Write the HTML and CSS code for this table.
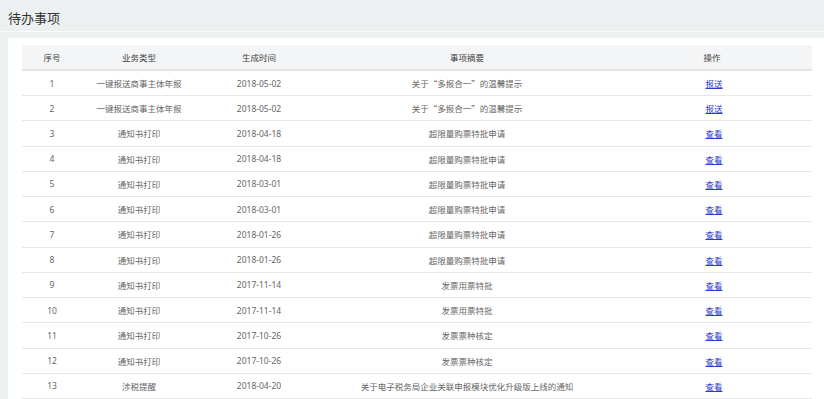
FILE: index.html
```html
<!DOCTYPE html>
<html lang="zh-CN">
<head>
    <meta charset="UTF-8">
    <title>待办事项</title>
    <link rel="stylesheet" href="styles.css">
</head>
<body>
    <div class="page-title">待办事项</div>

    <div class="panel">
        <table class="todo-table">
            <colgroup>
                <col class="col-no">
                <col class="col-type">
                <col class="col-date">
                <col class="col-summary">
                <col class="col-op">
            </colgroup>
            <thead>
                <tr>
                    <th>序号</th>
                    <th>业务类型</th>
                    <th>生成时间</th>
                    <th>事项摘要</th>
                    <th>操作</th>
                </tr>
            </thead>
            <tbody>
                <tr><td>1</td><td>一键报送商事主体年报</td><td>2018-05-02</td><td class="summary">关于“多报合一”的温馨提示</td><td><a href="#">报送</a></td></tr>
                <tr><td>2</td><td>一键报送商事主体年报</td><td>2018-05-02</td><td class="summary">关于“多报合一”的温馨提示</td><td><a href="#">报送</a></td></tr>
                <tr><td>3</td><td>通知书打印</td><td>2018-04-18</td><td class="summary">超限量购票特批申请</td><td><a href="#">查看</a></td></tr>
                <tr><td>4</td><td>通知书打印</td><td>2018-04-18</td><td class="summary">超限量购票特批申请</td><td><a href="#">查看</a></td></tr>
                <tr><td>5</td><td>通知书打印</td><td>2018-03-01</td><td class="summary">超限量购票特批申请</td><td><a href="#">查看</a></td></tr>
                <tr><td>6</td><td>通知书打印</td><td>2018-03-01</td><td class="summary">超限量购票特批申请</td><td><a href="#">查看</a></td></tr>
                <tr><td>7</td><td>通知书打印</td><td>2018-01-26</td><td class="summary">超限量购票特批申请</td><td><a href="#">查看</a></td></tr>
                <tr><td>8</td><td>通知书打印</td><td>2018-01-26</td><td class="summary">超限量购票特批申请</td><td><a href="#">查看</a></td></tr>
                <tr><td>9</td><td>通知书打印</td><td>2017-11-14</td><td class="summary">发票用票特批</td><td><a href="#">查看</a></td></tr>
                <tr><td>10</td><td>通知书打印</td><td>2017-11-14</td><td class="summary">发票用票特批</td><td><a href="#">查看</a></td></tr>
                <tr><td>11</td><td>通知书打印</td><td>2017-10-26</td><td class="summary">发票票种核定</td><td><a href="#">查看</a></td></tr>
                <tr><td>12</td><td>通知书打印</td><td>2017-10-26</td><td class="summary">发票票种核定</td><td><a href="#">查看</a></td></tr>
                <tr><td>13</td><td>涉税提醒</td><td>2018-04-20</td><td class="summary">关于电子税务局企业关联申报模块优化升级版上线的通知</td><td><a href="#">查看</a></td></tr>
            </tbody>
        </table>
    </div>
</body>
</html>
```

FILE: styles.css
```css
* {
    margin: 0;
    padding: 0;
    box-sizing: border-box;
}

body {
    background: #edf0f0;
    font-family: "Noto Sans", "Noto Sans CJK SC", sans-serif;
    overflow: hidden;
}

.page-title {
    height: 32px;
    padding: 9px 0 0 8px;
    font-family: "Noto Sans CJK SC", sans-serif;
    font-size: 13px;
    line-height: 17px;
    color: #333;
    border-bottom: 1px solid #fafbfb;
}

.panel {
    background: #fff;
    margin: 6px 0 0 8px;
    padding: 7px 12px 0 14px;
    min-height: 370px;
}

/* Table */
.todo-table {
    width: 790px;
    border-collapse: collapse;
    table-layout: fixed;
    font-size: 8.5px;
    color: #666;
}

.col-no { width: 60px; }
.col-type { width: 114px; }
.col-date { width: 126px; }
.col-summary { width: 290px; }
.col-op { width: 200px; }

.todo-table th,
.todo-table td {
    height: 25.25px;
    text-align: center;
    font-weight: normal;
    white-space: nowrap;
    border-bottom: 1px solid #e6e8e8;
}

.todo-table th {
    background: #f4f5f6;
    color: #444;
    border-bottom: 2px solid #e4e6e6;
}

.todo-table td.summary {
    font-family: "Noto Sans CJK SC", sans-serif;
}

.todo-table td:last-child {
    padding-left: 4px;
}

.todo-table a {
    color: #2a3bd0;
    text-decoration: underline;
}
```
